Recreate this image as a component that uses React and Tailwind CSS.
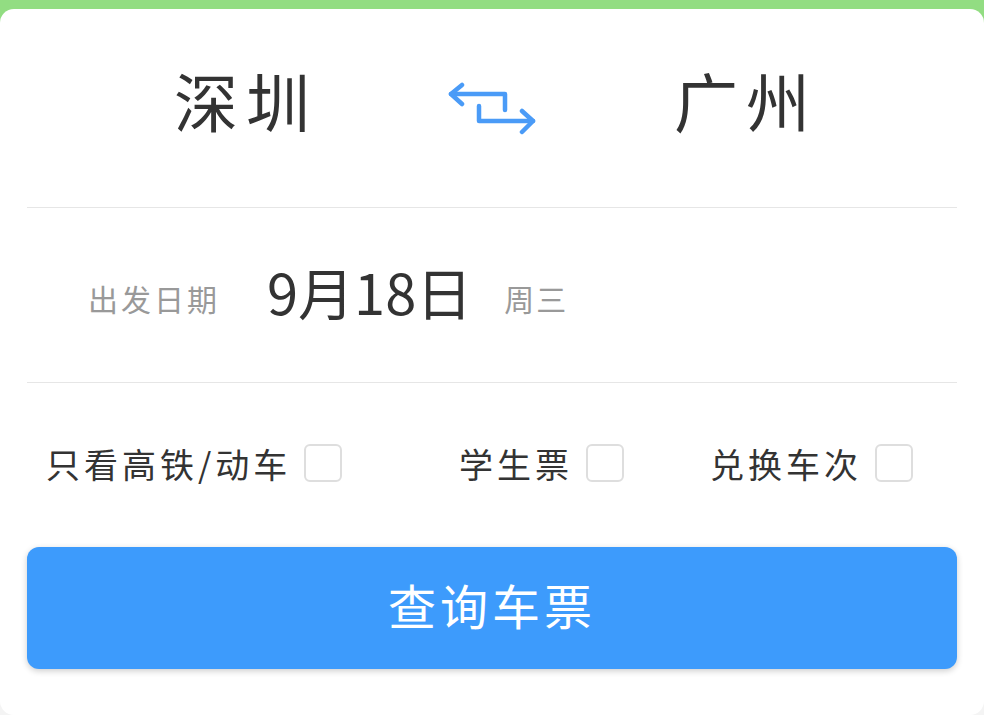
import { useState } from 'react';

const FONT = { fontFamily: '"Noto Sans CJK SC", "Noto Sans", sans-serif' };

function SwapIcon() {
  return (
    <svg width="88" height="56" viewBox="0 0 88 56" fill="none" stroke="#4a9bf7" strokeWidth="4.5" strokeLinecap="round" strokeLinejoin="round">
      <path d="M3 13 H57 V29" />
      <path d="M14 4 L3 13 L14 23" />
      <path d="M31 25 V40 H85" />
      <path d="M74 30 L85 40 L74 51" />
    </svg>
  );
}

function Check({ label, className = '' }) {
  const [on, setOn] = useState(false);
  return (
    <label className={`flex items-center cursor-pointer ${className}`}>
      <span className="text-[34px] tracking-[4px] text-[#333]">{label}</span>
      <button
        type="button"
        onClick={() => setOn(!on)}
        className={`ml-[13px] w-[38px] h-[38px] rounded-[6px] border-2 ${on ? 'border-[#3d9bfc] bg-[#3d9bfc]' : 'border-[#dedede] bg-white'}`}
      />
    </label>
  );
}

export default function App() {
  return (
    <div
      className="w-[984px] h-[715px] overflow-hidden bg-[linear-gradient(to_bottom,#92dd82_0px,#92dd82_40px,#f4f4f4_40px)]"
      style={FONT}
    >
      <div className="mt-[9px] h-[706px] rounded-[14px] bg-white flex flex-col">
        <div className="h-[198px] flex items-center justify-center gap-[138px] pb-[18px]">
          <span className="text-[64px] leading-none text-[#333] tracking-[8px] mr-[-8px]">深圳</span>
          <span className="mt-[20px]"><SwapIcon /></span>
          <span className="text-[64px] leading-none text-[#333] tracking-[8px] mr-[-8px]">广州</span>
        </div>

        <div className="mx-[27px] h-px bg-[#e6e6e6]" />

        <div className="h-[174px] flex items-center pl-[88px] pb-[8px]">
          <span className="text-[30px] tracking-[3px] text-[#999] mt-[14px]">出发日期</span>
          <span className="ml-[47px] text-[56px] text-[#333] leading-none">9月18日</span>
          <span className="ml-[32px] text-[30px] tracking-[2px] text-[#999] mt-[14px]">周三</span>
        </div>

        <div className="mx-[27px] h-px bg-[#e6e6e6]" />

        <div className="h-[164px] flex items-center pl-[46px] pb-[4px]">
          <Check label="只看高铁/动车" className="w-[413px]" />
          <Check label="学生票" className="w-[251px]" />
          <Check label="兑换车次" />
        </div>

        <button
          type="button"
          className="mx-[27px] h-[122px] rounded-[12px] bg-[#3d9bfc] text-white text-[48px] tracking-[4px] pb-[8px] shadow-[0_2px_6px_rgba(0,0,0,0.2)]"
        >
          查询车票
        </button>
      </div>
    </div>
  );
}
